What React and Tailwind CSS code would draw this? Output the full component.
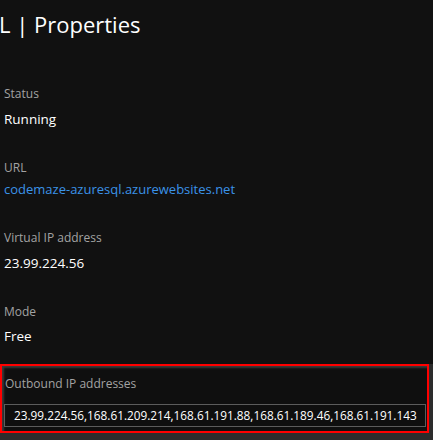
const props = [
  { label: "Status", value: "Running", gap: "mt-[8px]", h: "h-[74px]" },
  { label: "URL", value: "codemaze-azuresql.azurewebsites.net", link: true, gap: "mt-[4px]", h: "h-[70px]" },
  { label: "Virtual IP address", value: "23.99.224.56", gap: "mt-[8px]", h: "h-[74px]" },
  { label: "Mode", value: "Free", gap: "mt-[7px]", h: "h-[60px]" },
];

function Prop({ item }) {
  return (
    <div className={`${item.h} pl-[4px]`}>
      <p className="text-[12px] leading-[16px] text-[#a3a3a3]">{item.label}</p>
      <p
        className={
          item.link
            ? `${item.gap} text-[13px] leading-[18px] text-[#3b93e8]`
            : `${item.gap} text-[13.5px] leading-[18px] font-medium text-white`
        }
      >
        {item.value}
      </p>
    </div>
  );
}

export default function App() {
  return (
    <div
      className="h-[440px] w-[433px] overflow-hidden bg-[#111111]"
      style={{ fontFamily: '"Open Sans", "Noto Sans", sans-serif' }}
    >
      <h1 className="ml-[-1px] h-[39px] pt-[10px] text-[22px] leading-[29px] text-white">L | Properties</h1>
      <div className="mt-[47px]">
        {props.map((item) => (
          <Prop key={item.label} item={item} />
        ))}
      </div>
      <div className="flex">
        <div className="h-[69px] w-[429px] border-2 border-[#ff0000] bg-[#0f0f0f] pt-[10px] shadow-[inset_2px_2px_2px_#3a3a3a]">
          <p className="pl-[3px] text-[12px] leading-[16px] text-[#a3a3a3]">Outbound IP addresses</p>
          <div className="ml-[2px] mt-[12px] flex h-[23px] w-[422px] items-center overflow-hidden whitespace-nowrap border border-[#5c5c5c] pl-[9px] text-[11.8px] text-white">
            23.99.224.56,168.61.209.214,168.61.191.88,168.61.189.46,168.61.191.143
          </div>
        </div>
        <div className="w-[4px] bg-[#2c2c2c]" />
      </div>
      <div className="h-[8px] bg-[#2c2c2c]" />
    </div>
  );
}
